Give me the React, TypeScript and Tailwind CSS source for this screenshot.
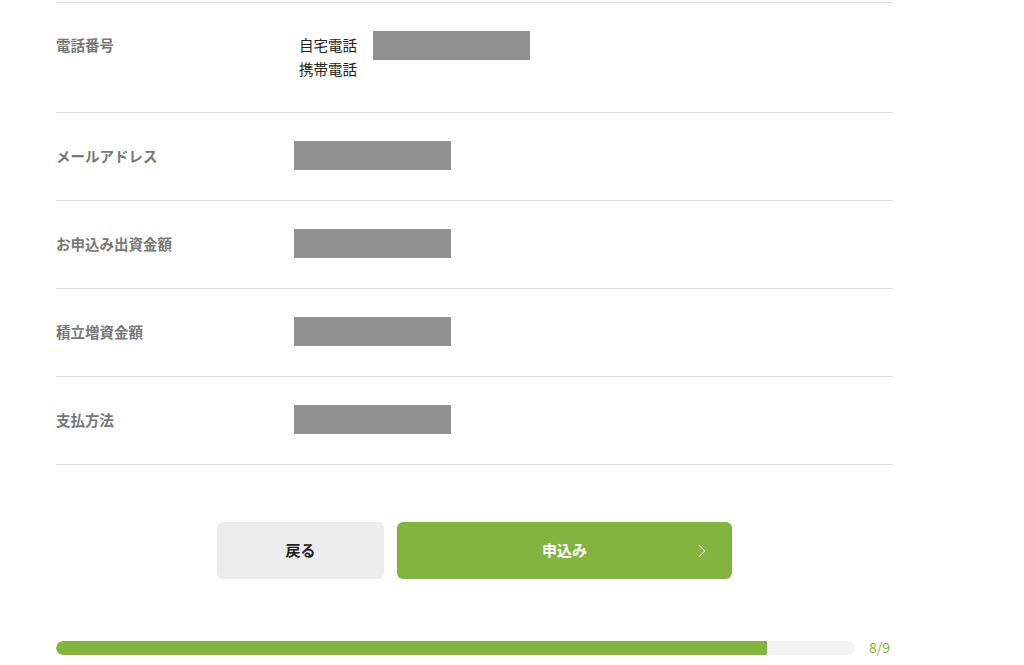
import { ChevronRight } from "lucide-react"

const rows = ["メールアドレス", "お申込み出資金額", "積立増資金額", "支払方法"]

export default function App() {
  return (
    <div
      className="w-[1024px] h-[665px] bg-white overflow-hidden"
      style={{ fontFamily: '"Noto Sans CJK JP", "Noto Sans", sans-serif' }}
    >
      <div className="ml-[56px] w-[837px] pt-[2px]">
        {/* phone row */}
        <div className="border-t border-b border-[#dedede] flex h-[111px] pt-[28px]">
          <div className="w-[238px] text-[14.5px] font-bold text-[#777] leading-[28px]">電話番号</div>
          <div className="pl-[5px] flex flex-col text-[14.5px] text-[#222] w-[79px]">
            <span className="leading-[28px]">自宅電話</span>
            <span className="leading-[20px]">携帯電話</span>
          </div>
          <div className="w-[157px] h-[29px] bg-[#909090]" />
        </div>

        {rows.map((label) => (
          <div key={label} className="border-b border-[#dedede] flex items-center h-[88px]">
            <div className="w-[238px] text-[14.5px] font-bold text-[#777] leading-[20px] -mt-[2px]">{label}</div>
            <div className="w-[157px] h-[29px] bg-[#909090] -mt-[2px]" />
          </div>
        ))}

        {/* buttons */}
        <div className="flex justify-center gap-[13px] mt-[57px]">
          <button className="w-[167px] h-[57px] rounded-[6px] bg-[#ececec] text-[15px] font-bold text-[#222]">
            戻る
          </button>
          <button className="relative w-[335px] h-[57px] rounded-[6px] bg-[#84b440] text-[15px] font-bold text-white">
            申込み
            <ChevronRight
              size={22}
              strokeWidth={1.1}
              className="absolute right-[19px] top-1/2 -translate-y-1/2 text-white"
            />
          </button>
        </div>

        {/* progress */}
        <div className="flex items-center mt-[58px]">
          <div className="w-[799px] h-[14px] rounded-full bg-[#f4f4f4] overflow-hidden">
            <div className="w-[711px] h-full bg-[#84b440] rounded-l-full" />
          </div>
          <span className="ml-[14px] text-[14px] text-[#84b440]">8/9</span>
        </div>
      </div>
    </div>
  )
}
